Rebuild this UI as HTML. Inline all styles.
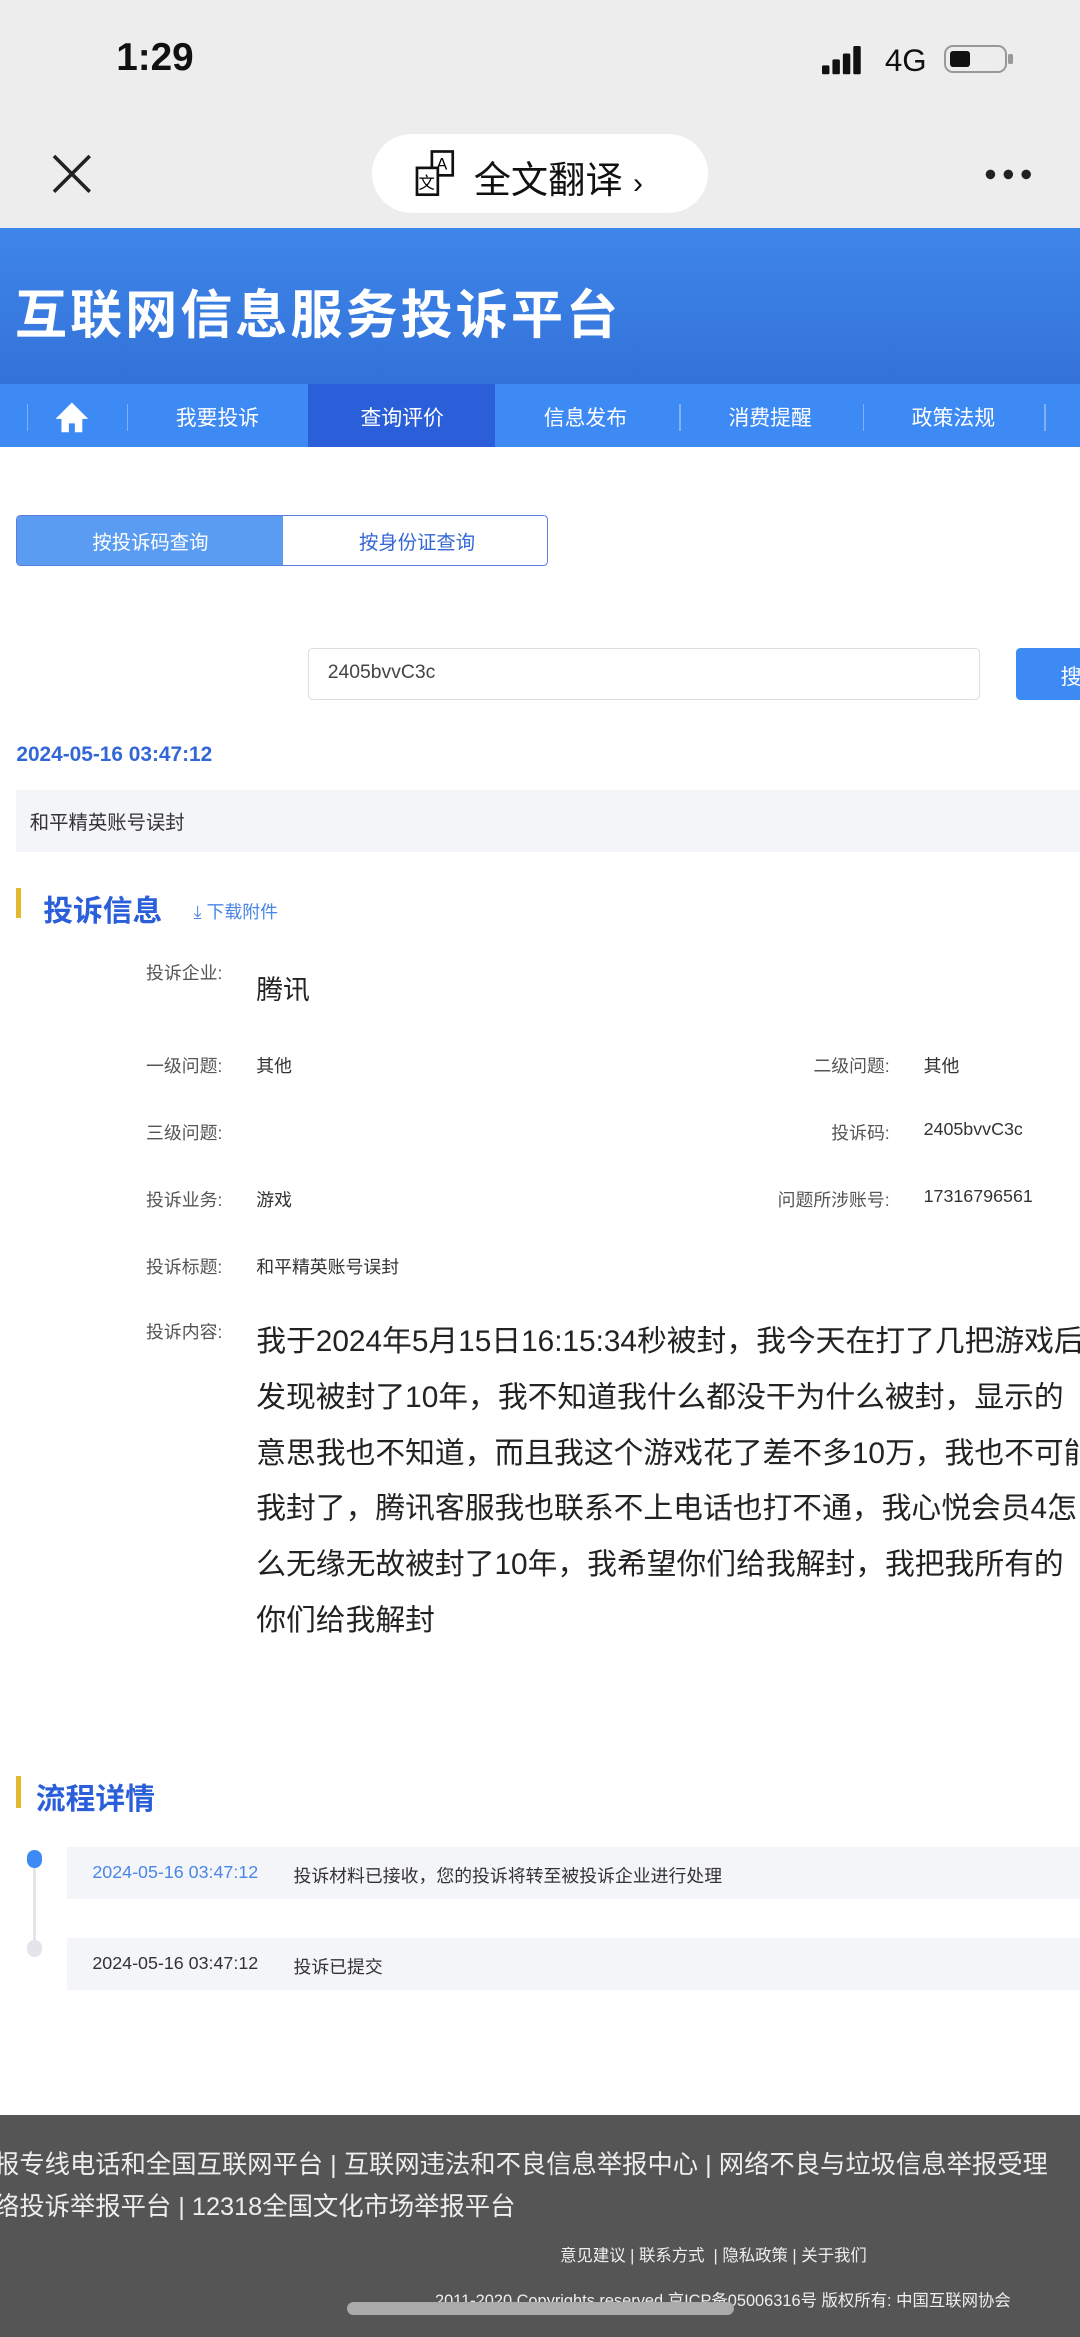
<!DOCTYPE html>
<html><head><meta charset="utf-8"><style>
html,body{margin:0;padding:0;width:1080px;height:2337px;overflow:hidden;background:#fff}
#w{position:relative;width:725px;height:1569px;zoom:1.48966;font-family:"Liberation Sans","Noto Sans CJK SC",sans-serif;overflow:hidden}
.a{position:absolute;white-space:nowrap}
.lbl{font-size:12px;color:#555}
.val{font-size:12px;color:#333}
</style></head><body><div id="w">
<div class="a" style="left:0;top:0;width:725px;height:153px;background:#ededed"></div>
<div class="a" style="left:78px;top:24px;font-size:26px;font-weight:bold;color:#111">1:29</div>
<svg class="a" style="left:552px;top:31px" width="35" height="20"><rect x="0" y="13" width="5" height="6" rx="1" fill="#111"/><rect x="7" y="9" width="5" height="10" rx="1" fill="#111"/><rect x="14" y="5" width="5" height="14" rx="1" fill="#111"/><rect x="21" y="0" width="5" height="19" rx="1" fill="#111"/></svg>
<div class="a" style="left:594px;top:29px;font-size:21px;color:#111">4G</div>
<div class="a" style="left:634px;top:30px;width:42px;height:19px;border:2px solid #999;border-radius:6px;box-sizing:border-box"></div>
<div class="a" style="left:638px;top:34px;width:13px;height:11px;background:#111;border-radius:2px"></div>
<div class="a" style="left:677px;top:36px;width:3px;height:7px;background:#999;border-radius:1px"></div>
<svg class="a" style="left:34px;top:103px" width="28" height="28"><path d="M2 2L26 26M26 2L2 26" stroke="#222" stroke-width="2.4"/></svg>
<div class="a" style="left:250px;top:90px;width:225px;height:53px;background:#fff;border-radius:27px"></div>
<svg class="a" style="left:278px;top:101px" width="32" height="32"><rect x="12" y="1" width="14" height="16" fill="#fff" stroke="#111" stroke-width="1.8"/><text x="15" y="13" font-size="11" font-family="Liberation Sans">A</text><rect x="2" y="12" width="14" height="18" fill="#fff" stroke="#111" stroke-width="1.8"/><text x="3" y="26" font-size="11" font-family="Noto Sans CJK SC">文</text></svg>
<div class="a" style="left:318px;top:101px;font-size:25px;color:#111">全文翻译 <span style="font-size:20px">›</span></div>
<svg class="a" style="left:660px;top:110px" width="36" height="14"><circle cx="5" cy="7" r="3.2" fill="#222"/><circle cx="17" cy="7" r="3.2" fill="#222"/><circle cx="29" cy="7" r="3.2" fill="#222"/></svg>
<div class="a" style="left:0;top:153px;width:725px;height:105px;background:linear-gradient(180deg,#3f86ea,#3372d9)"></div>
<div class="a" style="left:10px;top:184px;font-size:35px;font-weight:bold;color:#fff;letter-spacing:2px">互联网信息服务投诉平台</div>
<div class="a" style="left:0;top:258px;width:725px;height:42px;background:#3d8af5"></div>
<div class="a" style="left:207px;top:258px;width:125px;height:42px;background:#2a5fd9"></div>
<svg class="a" style="left:36px;top:269px" width="24" height="22"><path d="M12 1L1 12h4v9h5v-6h4v6h5v-9h4z" fill="#fff"/></svg>
<div class="a" style="left:118px;top:270px;font-size:14px;color:#fff">我要投诉</div>
<div class="a" style="left:242px;top:270px;font-size:14px;color:#fff">查询评价</div>
<div class="a" style="left:365px;top:270px;font-size:14px;color:#fff">信息发布</div>
<div class="a" style="left:489px;top:270px;font-size:14px;color:#fff">消费提醒</div>
<div class="a" style="left:612px;top:270px;font-size:14px;color:#fff">政策法规</div>
<div class="a" style="left:18px;top:271px;width:1px;height:18px;background:#7fb0f8"></div>
<div class="a" style="left:85px;top:271px;width:1px;height:18px;background:#7fb0f8"></div>
<div class="a" style="left:456px;top:271px;width:1px;height:18px;background:#7fb0f8"></div>
<div class="a" style="left:579px;top:271px;width:1px;height:18px;background:#7fb0f8"></div>
<div class="a" style="left:701px;top:271px;width:1px;height:18px;background:#7fb0f8"></div>
<div class="a" style="left:11px;top:346px;width:357px;height:34px;border:1px solid #5a7de0;border-radius:3px;box-sizing:border-box;overflow:hidden">
<div class="a" style="left:0;top:0;width:178px;height:34px;background:#5b9cf3"></div></div>
<div class="a" style="left:62px;top:354px;font-size:13px;color:#fff">按投诉码查询</div>
<div class="a" style="left:241px;top:354px;font-size:13px;color:#3367d6">按身份证查询</div>
<div class="a" style="left:207px;top:435px;width:451px;height:35px;border:1px solid #ddd;border-radius:3px;box-sizing:border-box"></div>
<div class="a" style="left:220px;top:444px;font-size:13px;color:#444">2405bvvC3c</div>
<div class="a" style="left:682px;top:435px;width:60px;height:35px;background:#3d8af5;border-radius:3px"></div>
<div class="a" style="left:712px;top:444px;font-size:14px;color:#fff">搜</div>
<div class="a" style="left:11px;top:499px;font-size:14px;font-weight:bold;color:#3367d6">2024-05-16 03:47:12</div>
<div class="a" style="left:11px;top:530px;width:714px;height:42px;background:#f4f5f8"></div>
<div class="a" style="left:20px;top:542px;font-size:13px;color:#333">和平精英账号误封</div>
<div class="a" style="left:11px;top:596px;width:3px;height:20px;background:#e6b830"></div>
<div class="a" style="left:29px;top:595px;font-size:20px;font-weight:bold;color:#2a5fd9">投诉信息</div>
<div class="a" style="left:130px;top:603px;font-size:12px;color:#4a86e8">⤓ 下载附件</div>
<div class="a lbl" style="left:98px;top:644px">投诉企业:</div>
<div class="a" style="left:172px;top:650px;font-size:18px;color:#222">腾讯</div>
<div class="a lbl" style="left:98px;top:706px">一级问题:</div><div class="a val" style="left:172px;top:706px">其他</div>
<div class="a lbl" style="left:546px;top:706px">二级问题:</div><div class="a val" style="left:620px;top:706px">其他</div>
<div class="a lbl" style="left:98px;top:751px">三级问题:</div>
<div class="a lbl" style="left:558px;top:751px">投诉码:</div><div class="a val" style="left:620px;top:751px">2405bvvC3c</div>
<div class="a lbl" style="left:98px;top:796px">投诉业务:</div><div class="a val" style="left:172px;top:796px">游戏</div>
<div class="a lbl" style="left:522px;top:796px">问题所涉账号:</div><div class="a val" style="left:620px;top:796px">17316796561</div>
<div class="a lbl" style="left:98px;top:841px">投诉标题:</div><div class="a val" style="left:172px;top:841px">和平精英账号误封</div>
<div class="a lbl" style="left:98px;top:885px">投诉内容:</div>
<div class="a" style="left:172px;top:882px;font-size:20px;color:#222;line-height:37.5px">我于2024年5月15日16:15:34秒被封，我今天在打了几把游戏后<br>发现被封了10年，我不知道我什么都没干为什么被封，显示的<br>意思我也不知道，而且我这个游戏花了差不多10万，我也不可能<br>我封了，腾讯客服我也联系不上电话也打不通，我心悦会员4怎<br>么无缘无故被封了10年，我希望你们给我解封，我把我所有的<br>你们给我解封</div>
<div class="a" style="left:11px;top:1192px;width:3px;height:22px;background:#e6b830"></div>
<div class="a" style="left:24px;top:1191px;font-size:20px;font-weight:bold;color:#2a5fd9">流程详情</div>
<div class="a" style="left:22px;top:1252px;width:2px;height:56px;background:#e3e5ea"></div>
<div class="a" style="left:18px;top:1242px;width:10px;height:12px;border-radius:5px;background:#3d8af5"></div>
<div class="a" style="left:18px;top:1302px;width:10px;height:12px;border-radius:5px;background:#e3e5ea"></div>
<div class="a" style="left:45px;top:1240px;width:680px;height:35px;background:#f4f5f8"></div>
<div class="a" style="left:62px;top:1250px;font-size:12px;color:#4a86e8">2024-05-16 03:47:12</div>
<div class="a" style="left:197px;top:1250px;font-size:12px;color:#333">投诉材料已接收，您的投诉将转至被投诉企业进行处理</div>
<div class="a" style="left:45px;top:1301px;width:680px;height:35px;background:#f4f5f8"></div>
<div class="a" style="left:62px;top:1311px;font-size:12px;color:#333">2024-05-16 03:47:12</div>
<div class="a" style="left:197px;top:1311px;font-size:12px;color:#333">投诉已提交</div>
<div class="a" style="left:0;top:1420px;width:725px;height:149px;background:#555"></div>
<div class="a" style="left:-4px;top:1440px;font-size:17px;color:#eee">报专线电话和全国互联网平台 | 互联网违法和不良信息举报中心 | 网络不良与垃圾信息举报受理</div>
<div class="a" style="left:-4px;top:1468px;font-size:17px;color:#eee">络投诉举报平台 | 12318全国文化市场举报平台</div>
<div class="a" style="left:376px;top:1505px;font-size:11px;color:#eee">意见建议 | 联系方式 &nbsp;| 隐私政策 | 关于我们</div>
<div class="a" style="left:292px;top:1535px;font-size:11px;color:#eee">2011-2020 Copyrights reserved 京ICP备05006316号 版权所有: 中国互联网协会</div>
<div class="a" style="left:233px;top:1545px;width:260px;height:9px;border-radius:5px;background:#aaa"></div>
</div></body></html>
